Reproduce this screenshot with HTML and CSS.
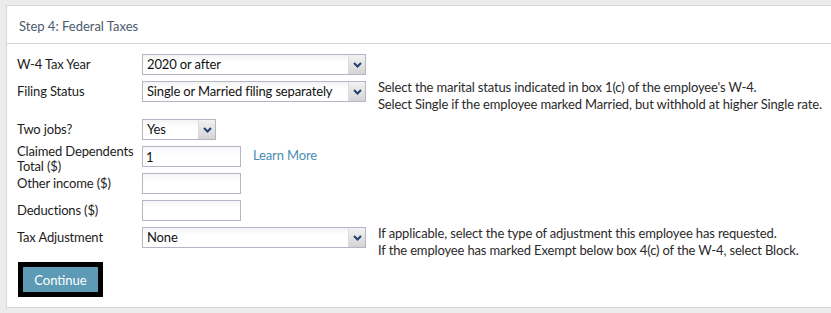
FILE: index.html
```html
<!DOCTYPE html>
<html lang="en">

<head>
    <meta charset="UTF-8">
    <title>Step 4: Federal Taxes</title>
    <link rel="stylesheet" href="styles.css">
</head>

<body>
    <div class="panel">
        <div class="panel-head">Step 4: Federal Taxes</div>
        <div class="panel-body">

            <div class="row">
                <div class="label">W-4 Tax Year</div>
                <div class="select wide">
                    <span class="value">2020 or after</span>
                    <span class="arrow"><svg width="9" height="6" viewBox="0 0 9 6"><path d="M1 1 L4.5 4.5 L8 1" fill="none" stroke="#243f73" stroke-width="2"/></svg></span>
                </div>
            </div>

            <div class="row">
                <div class="label">Filing Status</div>
                <div class="select wide">
                    <span class="value">Single or Married filing separately</span>
                    <span class="arrow"><svg width="9" height="6" viewBox="0 0 9 6"><path d="M1 1 L4.5 4.5 L8 1" fill="none" stroke="#243f73" stroke-width="2"/></svg></span>
                </div>
                <div class="help">
                    Select the marital status indicated in box 1(c) of the employee's W-4.<br>
                    Select Single if the employee marked Married, but withhold at higher Single rate.
                </div>
            </div>

            <div class="row">
                <div class="label">Two jobs?</div>
                <div class="select small">
                    <span class="value">Yes</span>
                    <span class="arrow"><svg width="9" height="6" viewBox="0 0 9 6"><path d="M1 1 L4.5 4.5 L8 1" fill="none" stroke="#243f73" stroke-width="2"/></svg></span>
                </div>
            </div>

            <div class="row">
                <div class="label two-line">Claimed Dependents Total ($)</div>
                <input class="field" type="text" value="1">
                <a class="learn" href="#">Learn More</a>
            </div>

            <div class="row">
                <div class="label">Other income ($)</div>
                <input class="field" type="text" value="">
            </div>

            <div class="row">
                <div class="label">Deductions ($)</div>
                <input class="field" type="text" value="">
            </div>

            <div class="row">
                <div class="label">Tax Adjustment</div>
                <div class="select wide">
                    <span class="value">None</span>
                    <span class="arrow"><svg width="9" height="6" viewBox="0 0 9 6"><path d="M1 1 L4.5 4.5 L8 1" fill="none" stroke="#243f73" stroke-width="2"/></svg></span>
                </div>
                <div class="help last">
                    If applicable, select the type of adjustment this employee has requested.<br>
                    If the employee has marked Exempt below box 4(c) of the W-4, select Block.
                </div>
            </div>

            <div class="actions">
                <button class="btn" type="button">Continue</button>
            </div>

        </div>
    </div>
</body>

</html>
```

FILE: styles.css
```css
* {
    margin: 0;
    padding: 0;
    box-sizing: border-box;
}

body {
    background: #ececec;
    font-family: "Lato", "Liberation Sans", sans-serif;
    font-size: 13px;
    letter-spacing: -0.15px;
    color: #1c1c1c;
    overflow: hidden;
    padding: 5px 0 0 6px;
}

.panel {
    width: 840px;
    height: 303px;
    background: #fff;
    border: 1px solid #d6d6e0;
}

.panel-head {
    height: 38px;
    padding: 12px 0 0 12px;
    border-bottom: 1px solid #d6d6e0;
    color: #4c5a6c;
    letter-spacing: 0;
}

.panel-body {
    padding: 10px 0 0 10px;
}

.row {
    display: flex;
    align-items: flex-start;
    margin-bottom: 6px;
}

.label {
    width: 125px;
    line-height: 21px;
}

.label.two-line {
    height: 21px;
    line-height: 15px;
    margin-top: -2px;
    width: 120px;
    margin-right: 5px;
}

.select {
    display: flex;
    height: 21px;
    border: 1px solid #b4b6c6;
    background: linear-gradient(#f4f4f4, #fff 40%);
}

.select.wide {
    width: 224px;
}

.select.small {
    width: 74px;
}

.select .value {
    flex: 1;
    padding-left: 4px;
    line-height: 19px;
    color: #111;
}

.select .arrow {
    width: 17px;
    display: flex;
    align-items: center;
    justify-content: center;
    border-left: 1px solid #dcdcdc;
    background: linear-gradient(#f2f2f2, #d4d4d4);
}

.field {
    width: 99px;
    height: 21px;
    border: 1px solid #b4b6c6;
    padding-left: 3px;
    font: inherit;
    letter-spacing: inherit;
    color: #111;
    background: linear-gradient(#f6f6f6, #fff 40%);
}

.help {
    margin: -2px 0 0 12px;
    line-height: 17px;
    color: #2a2a2a;
}

.help.last {
    margin-bottom: -13px;
}

.learn {
    margin-left: 12px;
    line-height: 19px;
    color: #4a8db5;
    text-decoration: none;
}

.actions {
    padding: 8px 0 0 1px;
}

.btn {
    width: 85px;
    height: 35px;
    border: 5px solid #000;
    background: #5c9ab5;
    color: #fff;
    font: inherit;
    letter-spacing: 0;
}
```
